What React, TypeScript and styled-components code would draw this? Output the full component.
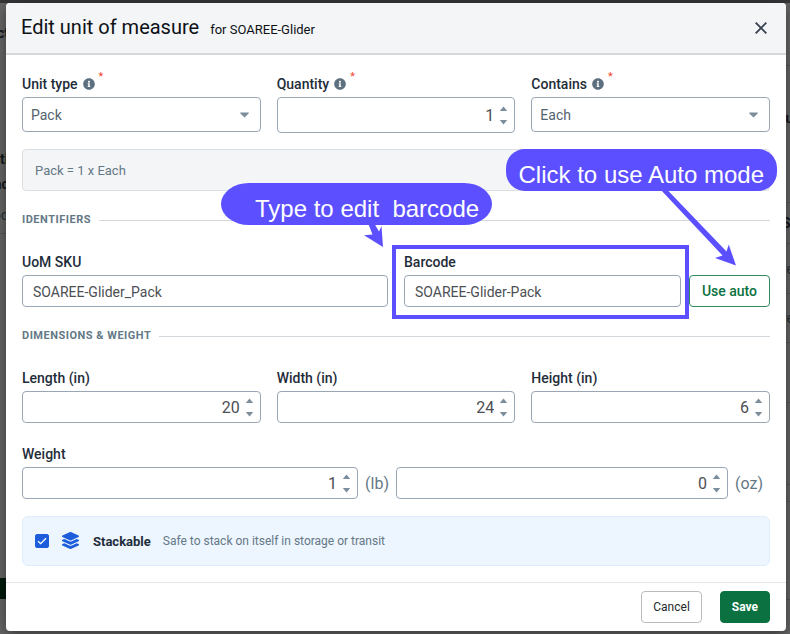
import React, { useId, useState } from "react";
import styled, { createGlobalStyle } from "styled-components";
import { FaInfoCircle, FaLayerGroup } from "react-icons/fa";

const color = {
  ink: "#1f2d3a",
  title: "#0e1116",
  muted: "#647885",
  border: "#98a6b5",
  caret: "#7c8d9c",
  rule: "#d3d8dc",
  green: "#0b7140",
  blue: "#1d5ddb",
  accent: "#5b4fff",
  backdrop: "#666666",
};

const GlobalStyle = createGlobalStyle`
  *, *::before, *::after { box-sizing: border-box; }
  body {
    margin: 0;
    font-family: Roboto, sans-serif;
    font-size: 14px;
    color: ${color.ink};
    background: ${color.backdrop};
  }
  button, input, select { font-family: inherit; margin: 0; }
`;

const Page = styled.div`
  position: relative;
  min-height: 100vh;
  padding: 3px 4px 3px 6px;
  overflow: hidden;
`;

/* Dimmed page that lies under the dialog */
const Behind = styled.div`
  position: absolute;
  inset: 0;
  display: flex;
  flex-direction: column;
  overflow: hidden;
`;

const TopBar = styled.div`
  height: 3px;
  flex: none;
  background: #363636;
`;

const BehindColumns = styled.div`
  flex: 1;
  display: flex;
  justify-content: space-between;
`;

const BehindColumn = styled.div<{ $width: number }>`
  width: ${(p) => p.$width}px;
  overflow: hidden;
`;

const BehindRow = styled.div<{
  $h: number;
  $line?: boolean;
  $light?: boolean;
  $fill?: string;
  $indent?: number;
}>`
  height: ${(p) => p.$h}px;
  line-height: ${(p) => p.$h}px;
  text-indent: ${(p) => p.$indent ?? 0}px;
  white-space: pre;
  font-size: 14px;
  font-weight: ${(p) => (p.$light ? 400 : 700)};
  color: ${(p) => (p.$light ? "#2b3136" : "#14181b")};
  background: ${(p) => p.$fill ?? "transparent"};
  border-bottom: ${(p) => (p.$line ? "1px solid #555555" : "none")};
`;

const Dialog = styled.section`
  position: relative;
  display: flex;
  flex-direction: column;
  background: #ffffff;
  border-radius: 4px;
  box-shadow: 0 4px 14px rgba(0, 0, 0, 0.45);
`;

const Header = styled.header`
  display: flex;
  align-items: center;
  height: 52px;
  padding: 0 16px 0 15px;
  background: #f3f5f7;
  border-bottom: 2px solid #d6d8da;
  border-radius: 4px 4px 0 0;
`;

const Title = styled.h1`
  display: flex;
  align-items: baseline;
  gap: 11px;
  flex: 1;
  margin: 0;
  font-size: 20px;
  line-height: 24px;
  font-weight: 400;
  color: ${color.title};
`;

const Subtitle = styled.span`
  font-size: 13px;
`;

const CloseButton = styled.button`
  display: flex;
  padding: 3px;
  border: 0;
  background: none;
  color: #36424e;
`;

const Body = styled.div`
  padding: 20px 16px 16px;
`;

const Columns = styled.div<{ $count: number; $gap?: number }>`
  display: grid;
  grid-template-columns: repeat(${(p) => p.$count}, minmax(0, 1fr));
  column-gap: ${(p) => p.$gap ?? 16}px;
  align-items: start;
`;

const Field = styled.div`
  position: relative;
  flex: 1;
  min-width: 0;
  display: flex;
  flex-direction: column;
  gap: 4px;
`;

const LabelRow = styled.div`
  display: flex;
  align-items: center;
  height: 18px;
`;

const Label = styled.label`
  font-size: 14px;
  line-height: 18px;
  font-weight: 500;
`;

const InfoIcon = styled(FaInfoCircle)`
  margin: 0 4px 0 5px;
  width: 12px;
  height: 12px;
  color: #5c7080;
`;

const Required = styled.span`
  align-self: flex-start;
  margin-top: -5px;
  font-size: 11px;
  line-height: 14px;
  color: #f4452d;
`;

const ControlBox = styled.div<{ $h: number }>`
  display: grid;
  align-items: center;
  flex: 1;
  min-width: 0;
  min-height: ${(p) => p.$h}px;
  border: 1px solid ${color.border};
  border-radius: 4px;
  background: #ffffff;
  > * {
    grid-area: 1 / 1;
  }
`;

const Select = styled.select`
  appearance: none;
  width: 100%;
  padding: 0 28px 0 8px;
  border: 0;
  background: none;
  font-size: 14px;
  line-height: 20px;
  color: #54626e;
`;

const SelectCaret = styled.svg`
  justify-self: end;
  margin-right: 11px;
  pointer-events: none;
  fill: ${color.caret};
`;

const TextInput = styled.input`
  width: 100%;
  padding: 2px 10px 0;
  border: 0;
  background: none;
  font-size: 14px;
  line-height: 20px;
  color: #4c4f53;
`;

const NumberInput = styled.input`
  appearance: textfield;
  width: 100%;
  padding: 2px 20px 0 10px;
  border: 0;
  background: none;
  text-align: right;
  font-size: 16px;
  line-height: 20px;
  color: #4c4f53;
  &::-webkit-inner-spin-button,
  &::-webkit-outer-spin-button {
    appearance: none;
    margin: 0;
  }
`;

const Spinner = styled.div`
  justify-self: end;
  display: flex;
  flex-direction: column;
  gap: 7px;
  margin-right: 6px;
  padding-top: 1px;
`;

const SpinButton = styled.button`
  display: flex;
  padding: 0;
  border: 0;
  background: none;
  svg {
    fill: ${color.caret};
  }
`;

const Summary = styled.div`
  display: flex;
  align-items: center;
  height: 42px;
  margin-top: 16px;
  padding: 0 12px;
  border: 1px solid #dbdee0;
  border-radius: 4px;
  background: #f4f5f7;
  font-size: 13px;
  color: ${color.muted};
`;

const SectionTitle = styled.h2`
  display: flex;
  align-items: center;
  gap: 8px;
  margin: 21px 0 25px;
  font-size: 11px;
  line-height: 16px;
  font-weight: 700;
  letter-spacing: 0.5px;
  color: ${color.muted};
  &::after {
    content: "";
    flex: 1;
    height: 1px;
    background: ${color.rule};
  }
`;

const BarcodeGroup = styled.div`
  position: relative;
  display: flex;
  align-items: flex-end;
  gap: 8px;
`;

const Button = styled.button<{ $kind: "outline" | "plain" | "solid" }>`
  height: 32px;
  padding: 0 ${(p) => (p.$kind === "outline" ? 12 : 11)}px;
  border-radius: 4px;
  border: 1px solid
    ${(p) => (p.$kind === "plain" ? "#b9bcbf" : p.$kind === "outline" ? "#2f8a5c" : color.green)};
  background: ${(p) => (p.$kind === "solid" ? color.green : "#ffffff")};
  color: ${(p) => (p.$kind === "solid" ? "#ffffff" : p.$kind === "outline" ? color.green : "#24292e")};
  font-size: ${(p) => (p.$kind === "outline" ? 14 : 12)}px;
  font-weight: ${(p) => (p.$kind === "plain" ? 400 : p.$kind === "solid" ? 700 : 500)};
`;

const Highlight = styled.div`
  position: absolute;
  inset: -8px -8px -12px -12px;
  border: 4px solid ${color.accent};
  pointer-events: none;
  z-index: 1;
`;

const Callout = styled.div`
  position: absolute;
  z-index: 2;
  height: 42px;
  padding: 5px 13px 0;
  background: ${color.accent};
  color: #ffffff;
  font-family: "Liberation Sans", sans-serif;
  font-size: 24px;
  line-height: 42px;
  white-space: pre;
`;

const TypeCallout = styled(Callout)`
  left: -183px;
  top: -70px;
  padding-left: 34px;
  border-radius: 28px / 21px;
`;

const AutoCallout = styled(Callout)`
  right: -7px;
  top: -104px;
  border-radius: 19px;
`;

const TypeArrow = styled.svg`
  position: absolute;
  z-index: 2;
  left: -44px;
  top: -30px;
  fill: ${color.accent};
`;

const AutoArrow = styled.svg`
  position: absolute;
  z-index: 2;
  right: 34px;
  top: -64px;
  fill: ${color.accent};
`;

const WeightField = styled(Field)`
  margin-top: 22px;
`;

const Measure = styled.div`
  display: flex;
  align-items: center;
`;

const Unit = styled.span`
  padding: 0 7px;
  font-size: 16px;
  color: ${color.muted};
`;

const Stackable = styled.label`
  display: flex;
  align-items: center;
  height: 50px;
  margin-top: 17px;
  padding: 0 12px;
  border: 1px solid #deecfd;
  border-radius: 6px;
  background: #edf5ff;
`;

const Checkbox = styled.input`
  appearance: none;
  width: 14px;
  height: 14px;
  border-radius: 2px;
  border: 1px solid ${color.blue};
  background: #ffffff;
  &:checked {
    background: ${color.blue};
  }
`;

const CheckHolder = styled.span`
  display: grid;
  place-items: center;
  > * {
    grid-area: 1 / 1;
  }
  svg {
    pointer-events: none;
  }
`;

const StackIcon = styled(FaLayerGroup)`
  width: 17px;
  height: 17px;
  margin: 0 14px 2px 13px;
  color: ${color.blue};
`;

const StackName = styled.strong`
  margin-right: 12px;
  font-size: 13px;
  font-weight: 700;
`;

const StackHint = styled.span`
  font-size: 12px;
  color: ${color.muted};
`;

const Footer = styled.footer`
  display: flex;
  justify-content: flex-end;
  gap: 18px;
  padding: 8px 16px;
  border-top: 1px solid #e1e6ea;
`;

const Up = () => (
  <svg width="9" height="6" viewBox="0 0 9 6">
    <path d="M4.5 .5 8.2 5H.8z" />
  </svg>
);

const Down = () => (
  <svg width="9" height="6" viewBox="0 0 9 6">
    <path d="M.8 1h7.4L4.5 5.5z" />
  </svg>
);

function NumberBox(props: { id: string; start: number; h?: number; label?: string }) {
  const [value, setValue] = useState(props.start);
  return (
    <ControlBox $h={props.h ?? 32}>
      <NumberInput
        id={props.id}
        type="number"
        aria-label={props.label}
        value={value}
        onChange={(e) => setValue(Number(e.target.value))}
      />
      <Spinner>
        <SpinButton type="button" aria-label="Increase" onClick={() => setValue(value + 1)}>
          <Up />
        </SpinButton>
        <SpinButton type="button" aria-label="Decrease" onClick={() => setValue(value - 1)}>
          <Down />
        </SpinButton>
      </Spinner>
    </ControlBox>
  );
}

function FieldLabel(props: { id: string; text: string; required?: boolean }) {
  return (
    <LabelRow>
      <Label htmlFor={props.id}>{props.text}</Label>
      {props.required && (
        <>
          <InfoIcon />
          <Required>*</Required>
        </>
      )}
    </LabelRow>
  );
}

function NumberField(props: { label: string; start: number; required?: boolean; h?: number }) {
  const id = useId();
  return (
    <Field>
      <FieldLabel id={id} text={props.label} required={props.required} />
      <NumberBox id={id} start={props.start} h={props.h} />
    </Field>
  );
}

function SelectField(props: { label: string; options: string[]; start: string }) {
  const id = useId();
  return (
    <Field>
      <FieldLabel id={id} text={props.label} required />
      <ControlBox $h={35}>
        <Select id={id} defaultValue={props.start}>
          {props.options.map((o) => (
            <option key={o}>{o}</option>
          ))}
        </Select>
        <SelectCaret width="9" height="6" viewBox="0 0 9 6">
          <path d="M.3 .6h8.4v1L4.5 5.6 .3 1.6z" />
        </SelectCaret>
      </ControlBox>
    </Field>
  );
}

function TextField(props: { label: string; start: string; children?: React.ReactNode }) {
  const id = useId();
  return (
    <Field>
      <FieldLabel id={id} text={props.label} />
      <ControlBox $h={32}>
        <TextInput id={id} type="text" defaultValue={props.start} />
      </ControlBox>
      {props.children}
    </Field>
  );
}

export default function App() {
  const [stackable, setStackable] = useState(true);
  return (
    <>
      <GlobalStyle />
      <Page>
        <Behind aria-hidden="true">
          <TopBar />
          <BehindColumns>
            <BehindColumn $width={20}>
              <BehindRow $h={60} $indent={-3}>ct</BehindRow>
              <BehindRow $h={83} />
              <BehindRow $h={26}>ti</BehindRow>
              <BehindRow $h={24} $indent={-6}>ac</BehindRow>
              <BehindRow $h={38} $light $line $indent={-7}>od</BehindRow>
              <BehindRow $h={344} />
              <BehindRow $h={21} $fill="#001a0d" />
            </BehindColumn>
            <BehindColumn $width={8}>
              <BehindRow $h={63} $line />
              <BehindRow $h={104}> u</BehindRow>
              <BehindRow $h={33} $line />
              <BehindRow $h={41} $line>St</BehindRow>
              <BehindRow $h={50} $light $line>re</BehindRow>
              <BehindRow $h={49} $light $line>re</BehindRow>
              <BehindRow $h={60} $line />
              <BehindRow $h={82} $line />
              <BehindRow $h={17} $line />
              <BehindRow $h={98} $line />
            </BehindColumn>
          </BehindColumns>
        </Behind>

        <Dialog role="dialog" aria-labelledby="dialog-title">
          <Header>
            <Title id="dialog-title">
              Edit unit of measure <Subtitle>for SOAREE-Glider</Subtitle>
            </Title>
            <CloseButton type="button" aria-label="Close">
              <svg width="12" height="12" viewBox="0 0 12 12" fill="none" stroke="currentColor" strokeWidth="1.9">
                <path d="M.7 .7 11.3 11.3M11.3 .7 .7 11.3" />
              </svg>
            </CloseButton>
          </Header>

          <Body>
            <Columns $count={3}>
              <SelectField label="Unit type" options={["Pack", "Case", "Pallet"]} start="Pack" />
              <NumberField label="Quantity" start={1} required h={36} />
              <SelectField label="Contains" options={["Each", "Pack"]} start="Each" />
            </Columns>
            <Summary>Pack = 1 x Each</Summary>

            <SectionTitle>IDENTIFIERS</SectionTitle>
            <Columns $count={2}>
              <TextField label="UoM SKU" start="SOAREE-Glider_Pack" />
              <BarcodeGroup>
                <TextField label="Barcode" start="SOAREE-Glider-Pack">
                  <Highlight />
                </TextField>
                <Button type="button" $kind="outline">Use auto</Button>
                <TypeArrow width="26" height="26" viewBox="0 0 26 26">
                  <path d="M8 0h6l5 8.500 2.500-5.500L23 24 4 12.300l8.500-.8z" />
                </TypeArrow>
                <AutoArrow width="80" height="78" viewBox="0 0 80 78">
                  <path d="M4 0h6.500L70.500 62.500 72.700 55.500 80 76.500 59 69l7.500-2.500z" />
                </AutoArrow>
                <TypeCallout>{"Type to edit  barcode"}</TypeCallout>
                <AutoCallout>Click to use Auto mode</AutoCallout>
              </BarcodeGroup>
            </Columns>

            <SectionTitle>DIMENSIONS &amp; WEIGHT</SectionTitle>
            <Columns $count={3}>
              <NumberField label="Length (in)" start={20} />
              <NumberField label="Width (in)" start={24} />
              <NumberField label="Height (in)" start={6} />
            </Columns>

            <WeightField>
              <FieldLabel id="weight-lb" text="Weight" />
              <Columns $count={2} $gap={0}>
                <Measure>
                  <NumberBox id="weight-lb" start={1} />
                  <Unit>(lb)</Unit>
                </Measure>
                <Measure>
                  <NumberBox id="weight-oz" label="Weight (oz)" start={0} />
                  <Unit>(oz)</Unit>
                </Measure>
              </Columns>
            </WeightField>

            <Stackable>
              <CheckHolder>
                <Checkbox
                  type="checkbox"
                  checked={stackable}
                  onChange={(e) => setStackable(e.target.checked)}
                />
                {stackable && (
                  <svg width="10" height="8" viewBox="0 0 10 8" fill="none" stroke="#ffffff" strokeWidth="1.3">
                    <path d="M1 4.200 3.700 6.700 9 1.200" />
                  </svg>
                )}
              </CheckHolder>
              <StackIcon />
              <StackName>Stackable</StackName>
              <StackHint>Safe to stack on itself in storage or transit</StackHint>
            </Stackable>
          </Body>

          <Footer>
            <Button type="button" $kind="plain">Cancel</Button>
            <Button type="button" $kind="solid">Save</Button>
          </Footer>
        </Dialog>
      </Page>
    </>
  );
}
